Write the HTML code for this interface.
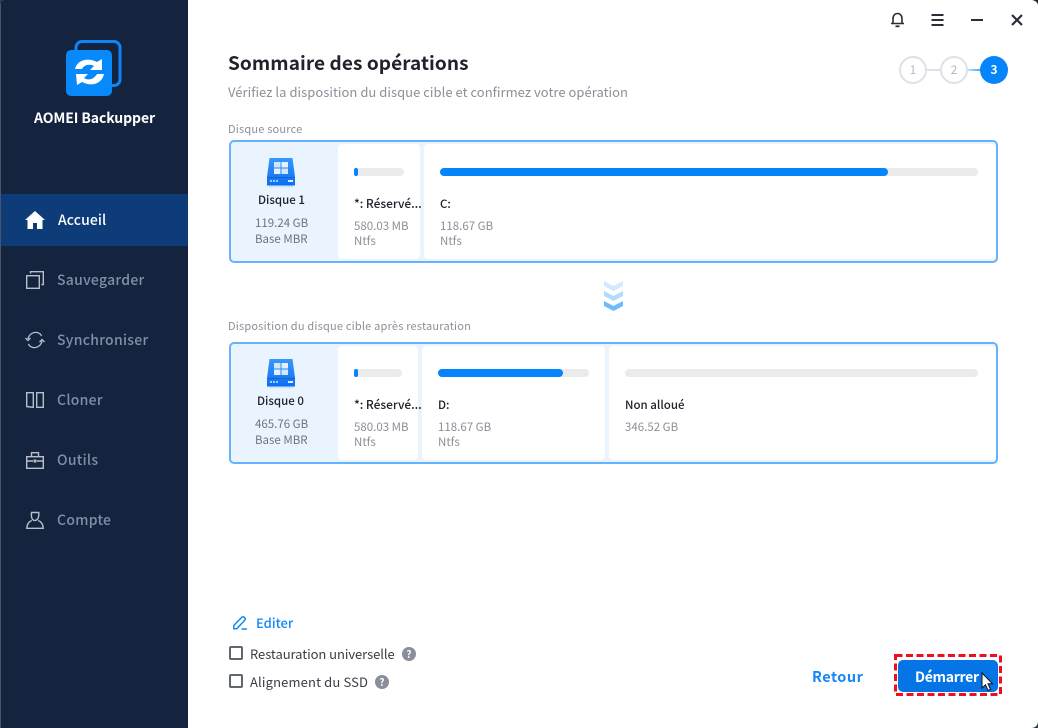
<!DOCTYPE html>
<html lang="fr"><head><meta charset="utf-8"><title>AOMEI Backupper</title>
<style>
*{box-sizing:border-box}
html,body{margin:0;padding:0;width:1038px;height:728px;overflow:hidden;background:#fff}
body{font-family:"Noto Sans CJK SC","Liberation Sans",sans-serif;position:relative}
.t{position:absolute;white-space:nowrap;line-height:16px;font-size:11.5px;color:#8c8f98}
.b{color:#20232b;font-weight:500}
.a{position:absolute}
.nav{font-size:14px;font-weight:500;color:#8190a8;line-height:20px;left:57px;letter-spacing:.28px}
.track{position:absolute;height:8px;border-radius:4px;background:#ebebeb}
.fill{position:absolute;left:0;top:0;height:8px;border-radius:4px;background:#0584fb}
.card{position:absolute;left:229px;width:769px;border:2px solid #66b2ff;border-radius:5px;background:#e9f4ff}
.cell{position:absolute;top:2px;bottom:2px;background:#fff;border-radius:4px}
svg{position:absolute;overflow:visible}
</style></head><body>
<div class="a" style="left:0;top:0;width:188px;height:728px;background:#14243f"></div>
<div class="a" style="left:0;top:0;width:1px;height:728px;background:#4b5468"></div>
<div class="a" style="left:1px;top:194px;width:187px;height:52px;background:#0d3c78"></div>

<svg style="left:66px;top:40px" width="56" height="56" viewBox="0 0 56 56">
<rect x="10" y="1.5" width="44" height="44" rx="6" fill="none" stroke="#0b85f8" stroke-width="3"/>
<rect x="0" y="10" width="46" height="46" rx="5" fill="#0788fb"/>
<path d="M9 29 C11 20 22 17 31 22 L36 19 L36 30 L24 30 L28 26 C23 23.500 18 25 16 29 Z" fill="#fff"/>
<path d="M38 34 C36 44 25 47 16 42 L11 45 L10 34 L22 34 L18 38 C23 41 28 39 31 34 Z" fill="#fff"/>
</svg>
<div class="t" style="left:34px;top:109px;font-size:14px;font-weight:700;color:#fff;line-height:18px;letter-spacing:-.1px">AOMEI Backupper</div>

<svg style="left:25px;top:211px" width="20" height="18" viewBox="0 0 20 18"><path d="M10 0 L20 9 L17.500 9 L17.500 18 L12 18 L12 12 L8 12 L8 18 L2.500 18 L2.500 9 L0 9 Z" fill="#fff"/></svg>
<div class="t nav" style="top:210px;color:#fff;left:58px;letter-spacing:.1px">Accueil</div>

<svg style="left:26px;top:271px" width="18" height="18" viewBox="0 0 18 18" fill="none" stroke="#b9bfca" stroke-width="1.400"><rect x=".7" y="4.700" width="12.600" height="12.600"/><path d="M4.500 2.500V.7H17.300V13.500H15.500"/></svg>
<div class="t nav" style="top:270px">Sauvegarder</div>

<svg style="left:25px;top:331px" width="20" height="18" viewBox="0 0 20 18" fill="none" stroke="#b9bfca" stroke-width="1.300"><path d="M3 8C4 3 8.500 .8 12 1.500 14 2 16 3.500 16.500 5"/><path d="M17 10C16 15 11.500 17.200 8 16.500 6 16 4 14.500 3.500 13"/><path d="M.5 7L3 9.500 5.500 7M14.500 11L17 8.500 19.500 11"/></svg>
<div class="t nav" style="top:330px">Synchroniser</div>

<svg style="left:26px;top:392px" width="18" height="16" viewBox="0 0 18 16" fill="none" stroke="#b9bfca" stroke-width="1.400"><path d="M.7.7H7.300V15.300L.7 14.600ZM10.700.7H17.300V15.300H10.700Z"/></svg>
<div class="t nav" style="top:390px">Cloner</div>

<svg style="left:26px;top:452px" width="18" height="17" viewBox="0 0 18 17" fill="none" stroke="#b9bfca" stroke-width="1.400"><rect x=".7" y="4.700" width="16.600" height="11.600"/><path d="M5.500 4.500V.7H12.500V4.500M1 9H7M11 9H17"/><rect x="7.500" y="7.500" width="3" height="3" fill="#b9bfca" stroke="none"/></svg>
<div class="t nav" style="top:450px">Outils</div>

<svg style="left:26px;top:511px" width="18" height="18" viewBox="0 0 18 18" fill="none" stroke="#b9bfca" stroke-width="1.400"><path d="M5.500 1.500H12.800C13 5 12.500 9 9 9.500 5.500 9.500 5 5 5.500 1.500Z"/><path d="M5.800 9.500C3 10.500 1 12.500.8 17.300H17.200C17 12.500 15 10.500 12.200 9.500"/></svg>
<div class="t nav" style="top:510px">Compte</div>

<!-- title bar -->
<svg style="left:890px;top:12px" width="15" height="16" viewBox="0 0 15 16" fill="none" stroke="#2b2d38" stroke-width="1.600"><path d="M1 11.500H14M3 11.500V6.500C3 3.500 5 1.500 7.500 1.500S12 3.500 12 6.500V11.500"/><path d="M5.500 14.300H9.500" stroke-width="1.800"/></svg>
<svg style="left:931px;top:14px" width="13" height="12" viewBox="0 0 13 12" fill="#2b2d38"><rect width="12" height="2" y="0" x=".5"/><rect width="12" height="2" y="5" x=".5"/><rect width="12" height="2" y="10" x=".5"/></svg>
<div class="a" style="left:971px;top:19px;width:12px;height:2px;background:#2b2d38"></div>
<svg style="left:1011px;top:14px" width="12" height="12" viewBox="0 0 12 12" stroke="#2b2d38" stroke-width="2.200" fill="none"><path d="M1 1L11 11M11 1L1 11"/></svg>

<div class="t" style="left:228px;top:49px;font-size:19px;line-height:28px;font-weight:700;color:#20232b;letter-spacing:.08px">Sommaire des opérations</div>
<div class="t" style="left:228px;top:83px;font-size:13px;line-height:18px;letter-spacing:.03px;color:#8c8f98">Vérifiez la disposition du disque cible et confirmez votre opération</div>

<!-- steps -->
<div class="a" style="left:926px;top:69px;width:16px;height:2px;background:#dde1e8"></div>
<div class="a" style="left:966px;top:69px;width:16px;height:2px;background:linear-gradient(90deg,#cfe6fd,#3b9dfb)"></div>
<div class="a" style="left:899px;top:56px;width:28px;height:28px;border:2px solid #dde1e8;border-radius:50%;background:#fff;color:#b4b8c4;font-size:12px;line-height:24px;text-align:center">1</div>
<div class="a" style="left:940px;top:56px;width:28px;height:28px;border:2px solid #dde1e8;border-radius:50%;background:#fff;color:#b4b8c4;font-size:12px;line-height:24px;text-align:center">2</div>
<div class="a" style="left:980px;top:56px;width:28px;height:28px;border-radius:50%;background:#0584fb;color:#fff;font-size:12px;font-weight:700;line-height:28px;text-align:center">3</div>

<div class="t" style="left:228px;top:121px;font-size:11px;letter-spacing:.2px">Disque source</div>

<!-- source card -->
<div class="card" style="top:140px;height:123px">
  <div class="cell" style="left:107px;width:82px"></div>
  <div class="cell" style="left:193px;width:572px"></div>
</div>
<svg style="left:267px;top:158px" width="29" height="30" viewBox="0 0 29 30"><defs><linearGradient id="g1" x1="0" y1="0" x2="0" y2="1"><stop offset="0" stop-color="#3a98f8"/><stop offset="1" stop-color="#0d6ef0"/></linearGradient></defs><path d="M2.500 0H25.500L28 19V27.500H0V19Z" fill="url(#g1)"/><rect x="7" y="4" width="6.500" height="5.500" fill="#cfe6fd"/><rect x="14.500" y="4" width="6.500" height="5.500" fill="#e3f0fe"/><rect x="7" y="10.500" width="6.500" height="5.500" fill="#e3f0fe"/><rect x="14.500" y="10.500" width="6.500" height="5.500" fill="#cfe6fd"/><rect x="21" y="22" width="5" height="2" fill="#d8ebff"/><path d="M3 23H11" stroke="#9dccfb" stroke-width="2" stroke-dasharray="2 1"/><rect x="0" y="19" width="28" height=".8" fill="#0a5fd6"/><rect x="2" y="27.500" width="24" height="2" fill="#bcd9f8" opacity=".6"/></svg>
<div class="t b" style="left:258px;top:192px">Disque 1</div>
<div class="t" style="left:255px;top:215px;color:#6f737d">119.24 GB</div>
<div class="t" style="left:255px;top:231px;color:#6f737d">Base MBR</div>

<div class="track" style="left:354px;top:168px;width:50px"><div class="fill" style="width:4px"></div></div>
<div class="t b" style="left:354px;top:196px;font-size:12px;letter-spacing:-.05px">*: Réservé...</div>
<div class="t" style="left:354px;top:218px">580.03 MB</div>
<div class="t" style="left:354px;top:233px">Ntfs</div>

<div class="track" style="left:440px;top:168px;width:538px"><div class="fill" style="width:448px"></div></div>
<div class="t b" style="left:440px;top:196px">C:</div>
<div class="t" style="left:440px;top:218px">118.67 GB</div>
<div class="t" style="left:440px;top:233px">Ntfs</div>

<!-- chevrons -->
<svg style="left:604px;top:281px" width="19" height="30" viewBox="0 0 19 30"><path d="M0 0L9.500 5 19 0V5L9.500 10 0 5Z" fill="#d3e9fe"/><path d="M0 10L9.500 15 19 10V15L9.500 20 0 15Z" fill="#b3dbfe"/><path d="M0 20L9.500 25 19 20V25L9.500 30 0 25Z" fill="#6dbafc"/></svg>

<div class="t" style="left:228px;top:318px;font-size:11px;letter-spacing:.2px">Disposition du disque cible après restauration</div>

<!-- target card -->
<div class="card" style="top:342px;height:122px">
  <div class="cell" style="left:107px;width:80px"></div>
  <div class="cell" style="left:191px;width:183px"></div>
  <div class="cell" style="left:378px;width:387px"></div>
</div>
<svg style="left:267px;top:359px" width="29" height="30" viewBox="0 0 29 30"><path d="M2.500 0H25.500L28 19V27.500H0V19Z" fill="url(#g1)"/><rect x="7" y="4" width="6.500" height="5.500" fill="#cfe6fd"/><rect x="14.500" y="4" width="6.500" height="5.500" fill="#e3f0fe"/><rect x="7" y="10.500" width="6.500" height="5.500" fill="#e3f0fe"/><rect x="14.500" y="10.500" width="6.500" height="5.500" fill="#cfe6fd"/><rect x="21" y="22" width="5" height="2" fill="#d8ebff"/><path d="M3 23H11" stroke="#9dccfb" stroke-width="2" stroke-dasharray="2 1"/><rect x="0" y="19" width="28" height=".8" fill="#0a5fd6"/><rect x="2" y="27.500" width="24" height="2" fill="#bcd9f8" opacity=".6"/></svg>
<div class="t b" style="left:257px;top:393px">Disque 0</div>
<div class="t" style="left:255px;top:416px;color:#6f737d">465.76 GB</div>
<div class="t" style="left:255px;top:432px;color:#6f737d">Base MBR</div>

<div class="track" style="left:354px;top:369px;width:48px"><div class="fill" style="width:4px"></div></div>
<div class="t b" style="left:354px;top:397px;font-size:12px;letter-spacing:-.05px">*: Réservé...</div>
<div class="t" style="left:354px;top:419px">580.03 MB</div>
<div class="t" style="left:354px;top:434px">Ntfs</div>

<div class="track" style="left:438px;top:369px;width:151px"><div class="fill" style="width:125px"></div></div>
<div class="t b" style="left:438px;top:397px">D:</div>
<div class="t" style="left:438px;top:419px">118.67 GB</div>
<div class="t" style="left:438px;top:434px">Ntfs</div>

<div class="track" style="left:625px;top:369px;width:353px"></div>
<div class="t b" style="left:625px;top:397px">Non alloué</div>
<div class="t" style="left:625px;top:419px">346.52 GB</div>

<!-- bottom -->
<svg style="left:233px;top:616px" width="15" height="14" viewBox="0 0 15 14" fill="none" stroke="#1587f7" stroke-width="1.500"><path d="M.8 12.700V9.500L8.500 1.500C9.500.5 10.500.5 11.500 1.500 12.500 2.500 12.500 3.500 11.500 4.500L3.800 12.700Z"/><path d="M8.500 13H14"/></svg>
<div class="t" style="left:256px;top:615px;font-size:13px;font-weight:500;color:#1587f7">Editer</div>

<div class="a" style="left:229px;top:646px;width:14px;height:14px;border:2px solid #62666f;border-radius:2px"></div>
<div class="t" style="left:250px;top:645px;font-size:13px;color:#3a3d46;line-height:18px;letter-spacing:-.06px">Restauration universelle</div>
<div class="a" style="left:402px;top:647px;width:14px;height:14px;border-radius:50%;background:#8a8e9a;color:#fff;font-size:10px;font-weight:700;line-height:14px;text-align:center">?</div>

<div class="a" style="left:229px;top:674px;width:14px;height:14px;border:2px solid #62666f;border-radius:2px"></div>
<div class="t" style="left:250px;top:673px;font-size:13px;color:#3a3d46;line-height:18px;letter-spacing:.14px">Alignement du SSD</div>
<div class="a" style="left:375px;top:675px;width:14px;height:14px;border-radius:50%;background:#8a8e9a;color:#fff;font-size:10px;font-weight:700;line-height:14px;text-align:center">?</div>

<div class="t" style="left:812px;top:668px;font-size:14.500px;font-weight:700;color:#1587f7;line-height:18px;letter-spacing:.5px">Retour</div>

<div class="a" style="left:898px;top:660px;width:100px;height:32px;background:#0575e6;border-radius:5px"></div>
<div class="t" style="left:915px;top:668px;font-size:14px;font-weight:700;color:#fff;line-height:18px;letter-spacing:-.3px">Démarrer</div>
<svg style="left:894px;top:654px" width="108" height="42" viewBox="0 0 108 42"><rect x="1.500" y="1.500" width="105" height="39" fill="none" stroke="#ef0d1f" stroke-width="3" stroke-dasharray="7 3.500"/></svg>
<svg style="left:981px;top:672px" width="12" height="20" viewBox="0 0 12 20"><path d="M1 1V16L4.500 12.800 7 18.500 9.500 17.300 7 11.800H11.500Z" fill="#fff" stroke="#111" stroke-width="1"/></svg>

<!-- window corners -->
<svg style="left:0;top:0" width="6" height="6"><path d="M0 0H5C2 .5 .5 2 0 5Z" fill="#3d3a44"/></svg>
<svg style="left:1032px;top:0" width="6" height="6"><path d="M6 0H0C3 .5 5.500 2 6 5Z" fill="#222"/></svg>
<svg style="left:1032px;top:722px" width="6" height="6"><path d="M6 6H0C3 5.500 5.500 4 6 0Z" fill="#333a48"/></svg>
</body></html>
